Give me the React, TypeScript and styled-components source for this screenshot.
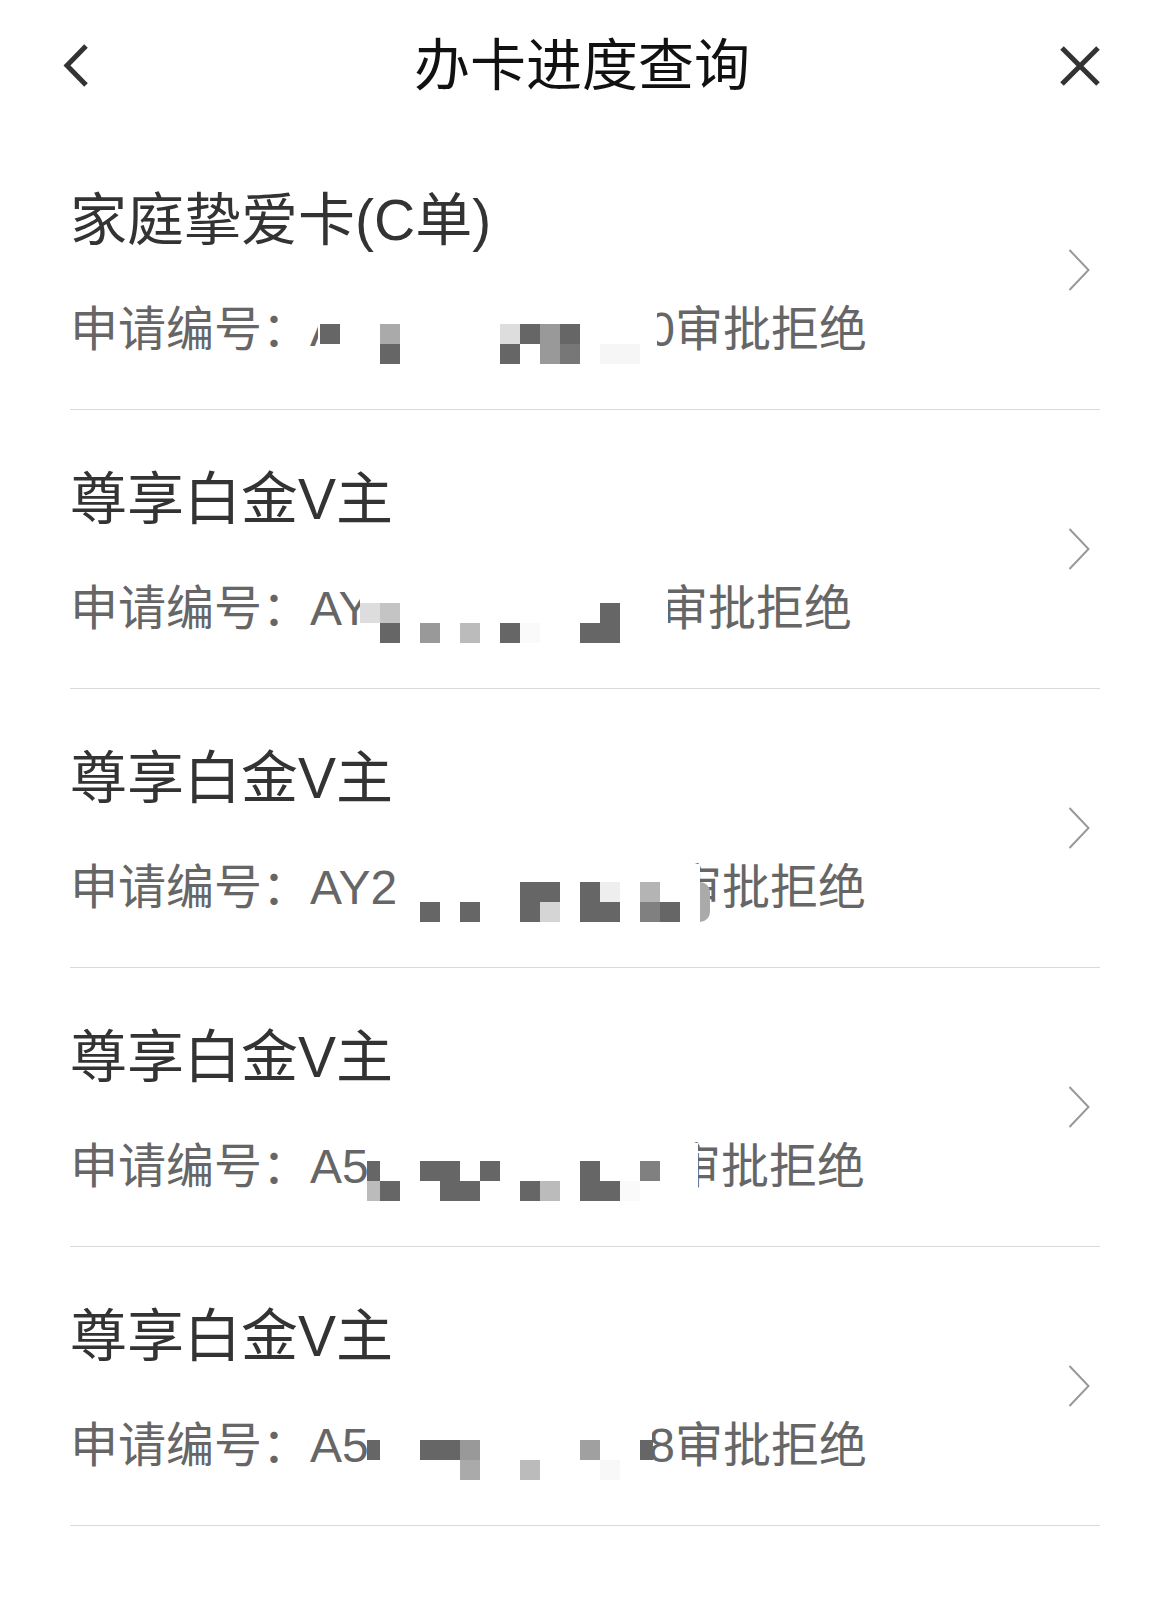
import React from 'react';
import styled, { createGlobalStyle } from 'styled-components';

const GlobalStyle = createGlobalStyle`
  html, body {
    margin: 0;
    padding: 0;
    background: #fff;
  }
  body {
    font-family: "Liberation Sans", "Noto Sans CJK SC", sans-serif;
    -webkit-font-smoothing: antialiased;
  }
`;

interface Cell {
  x: number;
  row: number;
  color: string;
  w?: number;
  round?: boolean;
}

interface Application {
  name: string;
  prefix: string;
  suffix?: string;
  serialWidth: number;
  cover: [number, number];
  cells: Cell[];
}

// x values are page coordinates of the pixelated blocks
const applications: Application[] = [
  {
    name: '家庭挚爱卡(C单)',
    prefix: 'A',
    suffix: '0',
    serialWidth: 365,
    cover: [318, 657],
    cells: [
      { x: 320, row: 0, color: '#666' },
      { x: 380, row: 0, color: '#aaa' },
      { x: 500, row: 0, color: '#ddd' },
      { x: 520, row: 0, color: '#666' },
      { x: 540, row: 0, color: '#999' },
      { x: 560, row: 0, color: '#666' },
      { x: 380, row: 1, color: '#666' },
      { x: 500, row: 1, color: '#666' },
      { x: 540, row: 1, color: '#999' },
      { x: 560, row: 1, color: '#777' },
      { x: 600, row: 1, color: '#f6f6f6' },
      { x: 620, row: 1, color: '#f6f6f6' },
    ],
  },
  {
    name: '尊享白金V主',
    prefix: 'AY',
    serialWidth: 350,
    cover: [360, 668],
    cells: [
      { x: 360, row: 0, color: '#ddd' },
      { x: 380, row: 0, color: '#c4c4c4' },
      { x: 600, row: 0, color: '#666' },
      { x: 380, row: 1, color: '#666' },
      { x: 420, row: 1, color: '#999' },
      { x: 460, row: 1, color: '#bbb' },
      { x: 500, row: 1, color: '#666' },
      { x: 520, row: 1, color: '#fafafa' },
      { x: 580, row: 1, color: '#666' },
      { x: 600, row: 1, color: '#666' },
    ],
  },
  {
    name: '尊享白金V主',
    prefix: 'AY2',
    serialWidth: 364,
    cover: [403, 700],
    cells: [
      { x: 520, row: 0, color: '#666' },
      { x: 540, row: 0, color: '#666' },
      { x: 580, row: 0, color: '#666' },
      { x: 600, row: 0, color: '#eee' },
      { x: 640, row: 0, color: '#b4b4b4' },
      { x: 420, row: 1, color: '#666' },
      { x: 460, row: 1, color: '#666' },
      { x: 520, row: 1, color: '#666' },
      { x: 540, row: 1, color: '#d5d5d5' },
      { x: 580, row: 1, color: '#666' },
      { x: 600, row: 1, color: '#666' },
      { x: 640, row: 1, color: '#808080' },
      { x: 660, row: 1, color: '#666' },
      { x: 700, row: 0, color: '#aaa', w: 10, round: true },
    ],
  },
  {
    name: '尊享白金V主',
    prefix: 'A5',
    serialWidth: 363,
    cover: [367, 698],
    cells: [
      { x: 367, row: 0, color: '#666', w: 13 },
      { x: 420, row: 0, color: '#666' },
      { x: 440, row: 0, color: '#666' },
      { x: 480, row: 0, color: '#666' },
      { x: 580, row: 0, color: '#666' },
      { x: 640, row: 0, color: '#808080' },
      { x: 367, row: 1, color: '#bbb', w: 13 },
      { x: 380, row: 1, color: '#666' },
      { x: 440, row: 1, color: '#666' },
      { x: 460, row: 1, color: '#666' },
      { x: 520, row: 1, color: '#666' },
      { x: 540, row: 1, color: '#bbb' },
      { x: 580, row: 1, color: '#666' },
      { x: 600, row: 1, color: '#666' },
      { x: 620, row: 1, color: '#fafafa' },
    ],
  },
  {
    name: '尊享白金V主',
    prefix: 'A5',
    suffix: '8',
    serialWidth: 365,
    cover: [367, 652],
    cells: [
      { x: 367, row: 0, color: '#666', w: 13 },
      { x: 420, row: 0, color: '#666' },
      { x: 440, row: 0, color: '#666' },
      { x: 460, row: 0, color: '#999' },
      { x: 580, row: 0, color: '#a0a0a0' },
      { x: 640, row: 0, color: '#666', w: 13 },
      { x: 460, row: 1, color: '#aaa' },
      { x: 520, row: 1, color: '#bbb' },
      { x: 600, row: 1, color: '#f8f8f8' },
    ],
  },
];

const ROW_LEFT = 70;

const Page = styled.div`
  width: 1170px;
  min-height: 1608px;
  background: #fff;
`;

const Header = styled.header`
  height: 131px;
  display: grid;
  grid-template-columns: 1fr auto 1fr;
  align-items: center;
  padding: 0 69px 0 63px;
`;

const HeaderTitle = styled.h1`
  margin: 0;
  font-size: 56px;
  font-weight: 400;
  line-height: 1;
  color: #111;
`;

const IconButton = styled.button<{ $align: 'start' | 'end' }>`
  justify-self: ${p => p.$align};
  display: flex;
  padding: 0;
  border: none;
  background: none;
  cursor: pointer;
`;

const List = styled.ul`
  list-style: none;
  margin: 0;
  padding: 0 70px;
`;

const Row = styled.li`
  height: 278px;
  display: flex;
  align-items: center;
  justify-content: space-between;
  border-bottom: 1px solid #d9d9d9;
`;

const Info = styled.div`
  display: flex;
  flex-direction: column;
  gap: 58px;
  padding-top: 6px;
`;

const CardName = styled.div`
  font-size: 57px;
  line-height: 56px;
  color: #333;
  white-space: nowrap;
`;

const Subtitle = styled.div`
  position: relative;
  display: flex;
  font-size: 48px;
  line-height: 48px;
  color: #666;
  white-space: nowrap;
`;

const Serial = styled.span<{ $width: number }>`
  width: ${p => p.$width}px;
  display: flex;
  justify-content: space-between;
`;

const Cover = styled.span<{ $left: number; $width: number }>`
  position: absolute;
  top: 0;
  left: ${p => p.$left}px;
  width: ${p => p.$width}px;
  height: 58px;
  background: #fff;
`;

const Block = styled.span<{ $left: number; $row: number; $w: number; $color: string; $round?: boolean }>`
  position: absolute;
  left: ${p => p.$left}px;
  top: ${p => 18 + p.$row * 20}px;
  width: ${p => p.$w}px;
  height: ${p => (p.$round ? 40 : 20)}px;
  background: ${p => p.$color};
  border-radius: ${p => (p.$round ? '0 10px 10px 0' : '0')};
`;

const Chevron = styled.svg`
  flex: none;
  margin-right: 10px;
`;

const BackIcon = () => (
  <svg width="27" height="45" viewBox="0 0 27 45">
    <polyline points="23,3 4,22.5 23,42" fill="none" stroke="#333" strokeWidth="5" />
  </svg>
);

const CloseIcon = () => (
  <svg width="42" height="42" viewBox="0 0 42 42">
    <path d="M3 3 L39 39 M39 3 L3 39" fill="none" stroke="#333" strokeWidth="5" />
  </svg>
);

const Redaction: React.FC<{ cover: [number, number]; cells: Cell[] }> = ({ cover, cells }) => {
  const [start, end] = cover;
  return (
    <Cover $left={start - ROW_LEFT} $width={end - start}>
      {cells.map((c, i) => (
        <Block
          key={i}
          $left={c.x - start}
          $row={c.row}
          $w={c.w ?? 20}
          $color={c.color}
          $round={c.round}
        />
      ))}
    </Cover>
  );
};

export default function App() {
  return (
    <>
      <GlobalStyle />
      <Page>
        <Header>
          <IconButton $align="start" aria-label="返回">
            <BackIcon />
          </IconButton>
          <HeaderTitle>办卡进度查询</HeaderTitle>
          <IconButton $align="end" aria-label="关闭">
            <CloseIcon />
          </IconButton>
        </Header>
        <List>
          {applications.map((app, i) => (
            <Row key={i}>
              <Info>
                <CardName>{app.name}</CardName>
                <Subtitle>
                  <span>申请编号：</span>
                  <Serial $width={app.serialWidth}>
                    <span>{app.prefix}</span>
                    <span>{app.suffix ?? ''}</span>
                  </Serial>
                  <span>审批拒绝</span>
                  <Redaction cover={app.cover} cells={app.cells} />
                </Subtitle>
              </Info>
              <Chevron width="22" height="42" viewBox="0 0 22 42">
                <polyline points="1.5,1 20.5,21 1.5,41" fill="none" stroke="#999" strokeWidth="2" />
              </Chevron>
            </Row>
          ))}
        </List>
      </Page>
    </>
  );
}
